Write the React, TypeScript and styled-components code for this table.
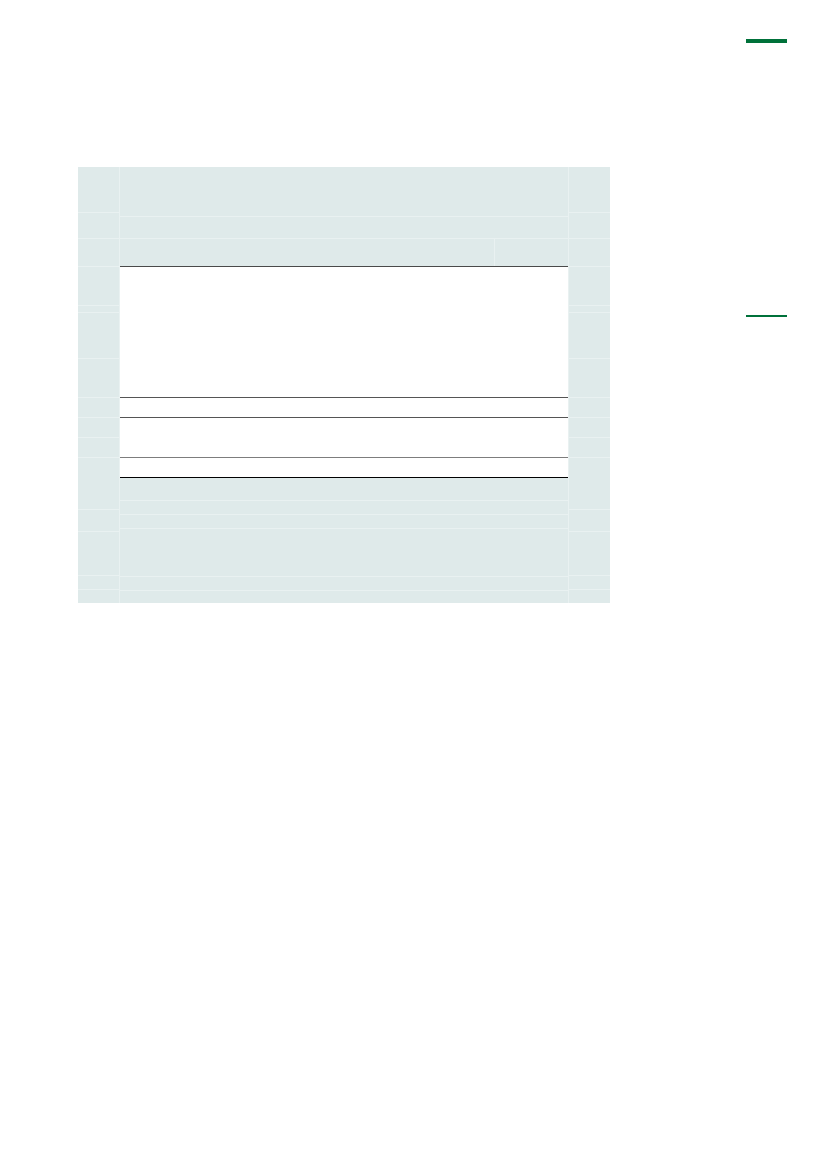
import styled, { createGlobalStyle } from "styled-components";

const GlobalStyle = createGlobalStyle`
    html, body {
        margin: 0;
        padding: 0;
        background: #ffffff;
        font-family: "Liberation Sans", Arial, sans-serif;
    }
`;

const FILL = "#dfeaea";
const FAINT = "#e9f1f1";

// heights of the stripes in the two gutter columns
const gutterRows = [45, 26, 28, 39, 7, 46, 39, 20, 20, 20, 52, 22, 44, 14, 13];
// heights of the note rows under the table
const noteRows = [22, 14, 14, 48, 14, 13];
const colWidths = [153, 73, 74, 74, 74];

function App() {
    return (
        <>
            <GlobalStyle />
            <Page>
                <TopRule />

                <Body>
                    <Panel>
                        <Gutter $side="left">
                            {gutterRows.map((h, i) => (
                                <Stripe key={i} $h={h} $first={i === 0} />
                            ))}
                        </Gutter>

                        <Main>
                            <TitleRow />
                            <SubRow />
                            <HeadRow>
                                <HeadCell />
                                <HeadCell $last />
                            </HeadRow>

                            <Table>
                                <TableRow $h={131} $line="#4a4a4a">
                                    {colWidths.map((w, i) => <Cell key={i} $w={w} />)}
                                </TableRow>
                                <TableRow $h={20} $line="#555555">
                                    {colWidths.map((w, i) => <Cell key={i} $w={w} />)}
                                </TableRow>
                                <TableRow $h={40} $line="#555555">
                                    {colWidths.map((w, i) => <Cell key={i} $w={w} />)}
                                </TableRow>
                                <TableRow $h={20} $line="#7d7d7d">
                                    {colWidths.map((w, i) => <Cell key={i} $w={w} />)}
                                </TableRow>
                            </Table>

                            {noteRows.map((h, i) => (
                                <NoteRow key={i} $h={h} $first={i === 0} />
                            ))}
                        </Main>

                        <Gutter $side="right">
                            {gutterRows.map((h, i) => (
                                <Stripe key={i} $h={h} $first={i === 0} />
                            ))}
                        </Gutter>
                    </Panel>

                    <Aside>
                        <SideRule />
                    </Aside>
                </Body>
            </Page>
        </>
    );
}

const Page = styled.div`
    width: 827px;
    height: 1169px;
    padding-top: 39px;
    box-sizing: border-box;
    background: #ffffff;
`;

const TopRule = styled.div`
    margin-left: 746px;
    width: 41px;
    height: 4px;
    background: #00713a;
`;

const Body = styled.div`
    display: flex;
    align-items: flex-start;
    margin-top: 124px;
    padding-left: 78px;
`;

const Panel = styled.div`
    display: grid;
    grid-template-columns: 42px 448px 42px;
    background: ${FILL};
`;

const Gutter = styled.div<{ $side: "left" | "right" }>`
    display: flex;
    flex-direction: column;
    ${({ $side }) =>
        $side === "left"
            ? `border-right: 1px solid ${FAINT};`
            : `border-left: 1px solid ${FAINT};`}
`;

const Stripe = styled.div<{ $h: number; $first?: boolean }>`
    height: ${({ $h }) => $h}px;
    box-sizing: border-box;
    border-top: ${({ $first }) => ($first ? "none" : `1px solid ${FAINT}`)};
`;

const Main = styled.div`
    display: flex;
    flex-direction: column;
`;

const TitleRow = styled.div`
    height: 49px;
`;

const SubRow = styled.div`
    height: 22px;
    box-sizing: border-box;
    border-top: 1px solid ${FAINT};
`;

const HeadRow = styled.div`
    display: grid;
    grid-template-columns: 374px 74px;
    height: 28px;
    box-sizing: border-box;
    border-top: 1px solid ${FAINT};
`;

const HeadCell = styled.div<{ $last?: boolean }>`
    border-left: ${({ $last }) => ($last ? `1px solid ${FAINT}` : "none")};
`;

const Table = styled.div`
    display: flex;
    flex-direction: column;
    background: #ffffff;
    border-bottom: 1px solid #000000;
`;

const TableRow = styled.div<{ $h: number; $line: string }>`
    display: flex;
    height: ${({ $h }) => $h}px;
    box-sizing: border-box;
    border-top: 1px solid ${({ $line }) => $line};
`;

const Cell = styled.div<{ $w: number }>`
    width: ${({ $w }) => $w}px;
`;

const NoteRow = styled.div<{ $h: number; $first?: boolean }>`
    height: ${({ $h }) => $h}px;
    box-sizing: border-box;
    border-top: ${({ $first }) => ($first ? "none" : `1px solid ${FAINT}`)};
`;

const Aside = styled.div`
    margin-left: 136px;
    width: 41px;
    padding-top: 148px;
`;

const SideRule = styled.div`
    height: 2px;
    background: #00713a;
`;

export default App;
